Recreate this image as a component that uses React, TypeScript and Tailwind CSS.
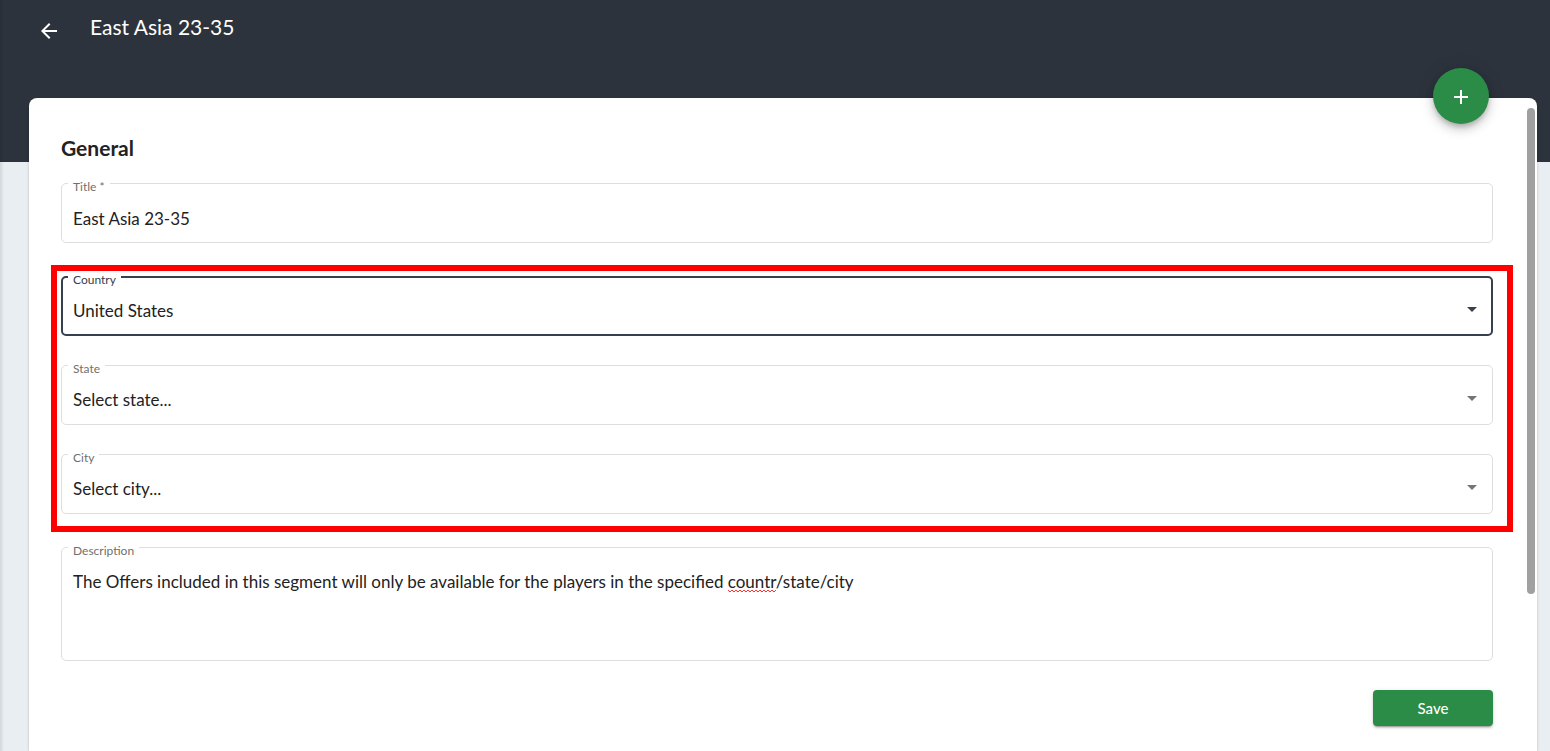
import { useState } from "react";
import type { ReactNode } from "react";

const control =
  "block w-full rounded-[5px] border bg-white text-[17px] leading-6 text-[#222] outline-none";

const idle = "border-[#dedede] px-[11px]";
const active = "border-2 border-[#36404f] px-[10px]";

type FieldProps = {
  id: string;
  label: string;
  focused?: boolean;
  children: ReactNode;
};

function Field({ id, label, focused = false, children }: FieldProps) {
  return (
    <div className="relative">
      {children}
      <label
        htmlFor={id}
        className={`absolute -top-1 left-[7px] bg-white px-[5px] text-xs leading-4 ${
          focused ? "text-[#36404f]" : "text-[#707070]"
        }`}
      >
        {label}
      </label>
    </div>
  );
}

type SelectFieldProps = {
  id: string;
  label: string;
  options: string[];
  focused?: boolean;
};

function SelectField({ id, label, options, focused = false }: SelectFieldProps) {
  return (
    <Field id={id} label={label} focused={focused}>
      <select
        id={id}
        className={`${control} h-[60px] appearance-none pt-[10px] ${focused ? active : idle}`}
      >
        {options.map((option) => (
          <option key={option}>{option}</option>
        ))}
      </select>
      <svg
        viewBox="0 0 24 24"
        aria-hidden="true"
        className={`pointer-events-none absolute top-[21px] right-[9px] size-6 ${
          focused ? "fill-[#36404f]" : "fill-[#757575]"
        }`}
      >
        <path d="M7 10l5 5 5-5z" />
      </svg>
    </Field>
  );
}

export default function App() {
  const [title, setTitle] = useState("East Asia 23-35");
  const [description, setDescription] = useState(
    "The Offers included in this segment will only be available for the players in the specified countr/state/city",
  );

  return (
    <div className="relative flex h-screen flex-col overflow-hidden bg-[#e9eef2] font-['Lato','Open_Sans',sans-serif] text-[#222]">
      <header className="flex h-[162px] shrink-0 items-start bg-[#2c333d] pt-[13px] pl-[37px] text-white">
        <button type="button" aria-label="Back" className="mt-1.5 size-6">
          <svg viewBox="0 0 24 24" aria-hidden="true" className="size-6 fill-white">
            <path d="M20 11H7.83l5.59-5.59L12 4l-8 8 8 8 1.41-1.41L7.83 13H20v-2z" />
          </svg>
        </button>
        <h1 className="ml-[29px] text-[21px] leading-7">{title}</h1>
      </header>

      <main className="relative -mt-16 mr-[13px] ml-[29px] flex-1 rounded-t-lg bg-white pt-[35px] pr-11 pl-8 shadow-[0_1px_3px_rgba(0,0,0,0.2)]">
        <button
          type="button"
          aria-label="Add"
          className="absolute -top-[30px] right-12 flex size-14 items-center justify-center rounded-full bg-[#2a8c46] shadow-[0_3px_5px_-1px_rgba(0,0,0,0.2),0_6px_10px_rgba(0,0,0,0.14),0_1px_18px_rgba(0,0,0,0.12)]"
        >
          <svg viewBox="0 0 24 24" aria-hidden="true" className="mt-0.5 size-6 fill-white">
            <path d="M19 13h-6v6h-2v-6H5v-2h6V5h2v6h6v2z" />
          </svg>
        </button>
        <div className="absolute top-[10px] right-0.5 h-[486px] w-2 rounded-full bg-[#a0a0a0]" />

        <form onSubmit={(event) => event.preventDefault()}>
          <h2 className="text-[21px] leading-[30px] font-bold">General</h2>

          <div className="mt-5">
            <Field id="title" label="Title *">
              <input
                id="title"
                type="text"
                value={title}
                onChange={(event) => setTitle(event.target.value)}
                className={`${control} ${idle} h-[60px] pt-[10px]`}
              />
            </Field>
          </div>

          <div className="mt-[22px] -mr-5 -ml-[10px] flex flex-col gap-[29px] border-6 border-[#f00] pt-[5px] pr-[14px] pb-3 pl-1">
            <SelectField id="country" label="Country" options={["United States"]} focused />
            <SelectField id="state" label="State" options={["Select state..."]} />
            <SelectField id="city" label="City" options={["Select city..."]} />
          </div>

          <div className="mt-[15px]">
            <Field id="description" label="Description">
              <textarea
                id="description"
                spellCheck={false}
                value={description}
                onChange={(event) => setDescription(event.target.value)}
                className={`${control} ${idle} h-[114px] resize-none pt-[22px]`}
              />
              <svg
                viewBox="0 0 48 4"
                aria-hidden="true"
                className="pointer-events-none absolute top-[42px] left-[667px] h-1 w-12 fill-none stroke-[#f33]"
              >
                <path d="M0 1l2 2 2-2 2 2 2-2 2 2 2-2 2 2 2-2 2 2 2-2 2 2 2-2 2 2 2-2 2 2 2-2 2 2 2-2 2 2 2-2 2 2 2-2 2 2 2-2" />
              </svg>
            </Field>
          </div>

          <div className="mt-[29px] flex justify-end">
            <button
              type="submit"
              className="h-9 w-[120px] rounded bg-[#2a8c46] text-[15px] font-medium text-white shadow-[0_3px_1px_-2px_rgba(0,0,0,0.2),0_2px_2px_rgba(0,0,0,0.14),0_1px_5px_rgba(0,0,0,0.12)]"
            >
              Save
            </button>
          </div>
        </form>
      </main>

      <div className="pointer-events-none absolute inset-y-0 left-0 w-1 bg-linear-to-r from-black/10 to-transparent" />
    </div>
  );
}
